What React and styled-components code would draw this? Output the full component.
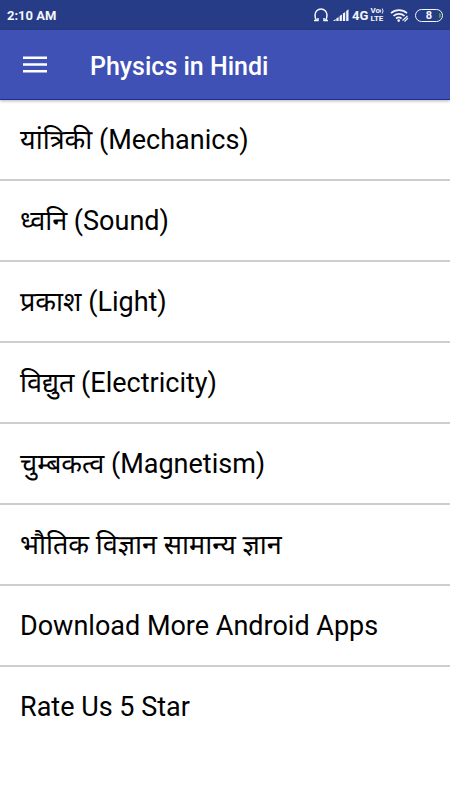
import styled, { createGlobalStyle } from "styled-components";

const GlobalStyle = createGlobalStyle`
  * {
    box-sizing: border-box;
  }

  body {
    margin: 0;
    background-color: #fff;
    font-family: Roboto, "Noto Sans Devanagari", "Noto Sans", sans-serif;
  }
`;

const StatusBar = styled.div`
  display: flex;
  align-items: center;
  justify-content: space-between;
  height: 30px;
  padding: 0 7px;
  background-color: #273c87;
  color: #f4f6fb;
  font-size: 13px;
  font-weight: 700;
`;

const StatusIcons = styled.div`
  display: flex;
  align-items: center;
  gap: 2px;

  svg {
    display: block;
  }
`;

const Volte = styled.span`
  display: flex;
  flex-direction: column;
  margin-right: 4px;
  font-size: 8px;
  line-height: 8px;
`;

const VoiceRow = styled.span`
  display: flex;
  align-items: center;
  height: 8px;
`;

const Battery = styled.span`
  position: relative;
  width: 28px;
  height: 13px;
  margin-left: 4px;
  border: 1px solid #f4f6fb;
  border-radius: 7px;
  font-size: 11px;
  line-height: 11px;
  text-align: center;

  &::after {
    content: "";
    position: absolute;
    top: 3px;
    right: 1px;
    width: 2px;
    height: 5px;
    border-radius: 0 2px 2px 0;
    background-color: #3fa535;
  }
`;

const Header = styled.header`
  position: relative;
  display: flex;
  align-items: center;
  gap: 40px;
  height: 70px;
  padding: 5px 20px 0;
  border-bottom: 1px solid #1a2f9c;
  background-color: #3f51b5;
  color: #fff;
  box-shadow: 0 1px 3px rgba(0, 0, 0, 0.3);
`;

const MenuButton = styled.button`
  display: flex;
  justify-content: center;
  width: 30px;
  padding: 0;
  border: none;
  background: none;
  color: inherit;
  cursor: pointer;
`;

const Title = styled.h1`
  margin: 0;
  font-size: 25px;
  line-height: 32px;
  font-weight: 500;
`;

const TopicList = styled.ul`
  margin: 0;
  padding: 0;
  list-style: none;
`;

const TopicItem = styled.li`
  border-bottom: 2px solid #cecece;

  &:last-child {
    border-bottom: none;
  }
`;

const TopicLink = styled.a`
  display: flex;
  align-items: center;
  height: 79px;
  padding: 0 20px;
  color: #000;
  font-size: 27px;
  line-height: 32px;
  text-decoration: none;
`;

const topics = [
  "यांत्रिकी (Mechanics)",
  "ध्वनि (Sound)",
  "प्रकाश (Light)",
  "विद्युत (Electricity)",
  "चुम्बकत्व (Magnetism)",
  "भौतिक विज्ञान सामान्य ज्ञान",
  "Download More Android Apps",
  "Rate Us 5 Star",
];

const HeadphonesIcon = () => (
  <svg width="18" height="14" viewBox="0 0 18 14" fill="none" stroke="currentColor" strokeWidth="1.5">
    <path d="M3.5 12.5C2.2 10.5 2 9 2 7a6 6 0 0 1 12 0c0 2-.2 3.5-1.5 5.5" />
    <path d="M1 12.5h4V10M15 12.5h-4V10" />
  </svg>
);

const SignalIcon = () => (
  <svg width="17" height="12" viewBox="0 0 17 12" fill="currentColor">
    <path d="M0 12l2.500-2v2zM3.300 9.500l2.300-1.500v4H3.300zM6.600 7l2.300-1.500V12H6.600zM9.900 4.500l2.300-1.500v9H9.900zM13.200 2l2.300-1.800V12h-2.300z" />
  </svg>
);

const VoiceWavesIcon = () => (
  <svg width="4" height="6" viewBox="0 0 4 6" fill="none" stroke="currentColor" strokeWidth="0.9">
    <path d="M.6 1.5v3M2.3 .5q1.500 2.500 0 5" />
  </svg>
);

const WifiIcon = () => (
  <svg width="19" height="13" viewBox="0 0 19 13" fill="none" stroke="currentColor" strokeWidth="1.7">
    <path d="M1 4.200a12 12 0 0 1 16 0M3.500 7a8 8 0 0 1 11 0M6 9.500a4.500 4.500 0 0 1 5.500 0" />
    <circle cx="8.7" cy="11.6" r="1.3" fill="currentColor" stroke="none" />
    <path d="M12.500 11.500l5-4.500M14.500 12.500l3.500-3.500" strokeWidth="1.1" />
  </svg>
);

const App = () => {
  return (
    <>
      <GlobalStyle />
      <StatusBar>
        <span>2:10 AM</span>
        <StatusIcons>
          <HeadphonesIcon />
          <SignalIcon />
          <span>4G</span>
          <Volte>
            <VoiceRow>
              Vo
              <VoiceWavesIcon />
            </VoiceRow>
            <span>LTE</span>
          </Volte>
          <WifiIcon />
          <Battery>8</Battery>
        </StatusIcons>
      </StatusBar>
      <Header>
        <MenuButton type="button" aria-label="Menu">
          <svg width="24" height="22" viewBox="0 0 24 22" fill="currentColor">
            <path d="M0 .5h24V3H0zM0 7.3h24v2.500H0zM0 14h24v2.500H0z" />
          </svg>
        </MenuButton>
        <Title>Physics in Hindi</Title>
      </Header>
      <TopicList>
        {topics.map((topic) => (
          <TopicItem key={topic}>
            <TopicLink href="#">{topic}</TopicLink>
          </TopicItem>
        ))}
      </TopicList>
    </>
  );
};

export default App;
